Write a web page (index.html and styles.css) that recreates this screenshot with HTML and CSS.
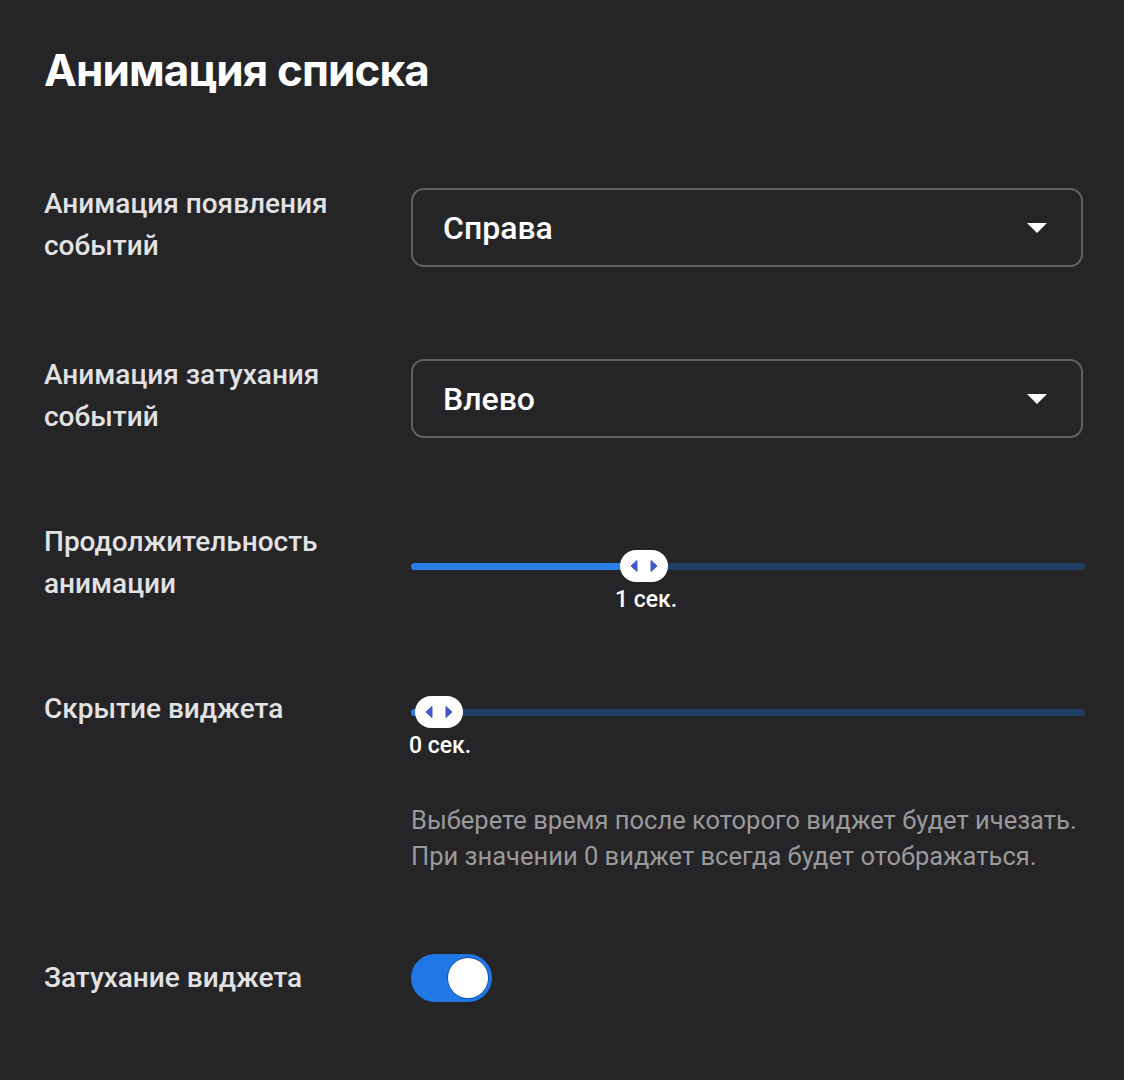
FILE: index.html
```html
<!DOCTYPE html>
<html lang="ru">
<head>
<meta charset="utf-8">
<title>Анимация списка</title>
<link rel="stylesheet" href="styles.css">
</head>
<body>
<main class="page">
  <h1 class="title">Анимация списка</h1>

  <section class="row row-1">
    <div class="label">Анимация появления<br>событий</div>
    <div class="control">
      <div class="select">
        <span class="select-value">Справа</span>
        <span class="select-arrow"></span>
      </div>
    </div>
  </section>

  <section class="row row-2">
    <div class="label">Анимация затухания<br>событий</div>
    <div class="control">
      <div class="select">
        <span class="select-value">Влево</span>
        <span class="select-arrow"></span>
      </div>
    </div>
  </section>

  <section class="row row-3">
    <div class="label">Продолжительность<br>анимации</div>
    <div class="control slider-control slider-control-3">
      <div class="slider" style="--pos:233px">
        <div class="track"><div class="fill"></div></div>
        <div class="thumb">
          <svg width="48" height="32" viewBox="0 0 48 32"><polygon points="11,16 17,10.5 17,21.5"/><polygon points="37,16 31,10.5 31,21.5"/></svg>
        </div>
      </div>
      <div class="value" style="--pos:235px"><span>1 сек.</span></div>
    </div>
  </section>

  <section class="row row-4">
    <div class="label">Скрытие виджета</div>
    <div class="control slider-control slider-control-4">
      <div class="slider" style="--pos:28px">
        <div class="track"><div class="fill"></div></div>
        <div class="thumb">
          <svg width="48" height="32" viewBox="0 0 48 32"><polygon points="11,16 17,10.5 17,21.5"/><polygon points="37,16 31,10.5 31,21.5"/></svg>
        </div>
      </div>
      <div class="value" style="--pos:29px"><span>0 сек.</span></div>
      <p class="help">Выберете время после которого виджет будет ичезать.<br>При значении 0 виджет всегда будет отображаться.</p>
    </div>
  </section>

  <section class="row row-5">
    <div class="label">Затухание виджета</div>
    <div class="control">
      <div class="toggle"><div class="knob"></div></div>
    </div>
  </section>
</main>
</body>
</html>
```

FILE: styles.css
```css
html, body {
  margin: 0;
  padding: 0;
  background: #252527;
}

.page {
  padding: 44px 0 0 44px;
  font-family: Roboto, "Liberation Sans", Arial, sans-serif;
  color: #e4e4e6;
}

.title {
  margin: 0;
  font-family: Inter, "Noto Sans", sans-serif;
  font-weight: 700;
  font-size: 44px;
  line-height: 52px;
  color: #ffffff;
  letter-spacing: -0.9px;
}

.row {
  display: grid;
  grid-template-columns: 367px 674px;
  align-items: start;
}

.row-1 { margin-top: 87px; }
.row-2 { margin-top: 87px; }
.row-3 { margin-top: 83px; }
.row-4 { margin-top: 75px; }
.row-5 { margin-top: 80px; align-items: center; }

.label {
  font-size: 28px;
  font-weight: 500;
  line-height: 42px;
  color: #e2e2e4;
}

.select {
  box-sizing: border-box;
  width: 672px;
  height: 79px;
  margin-top: 5px;
  border: 2px solid #626264;
  border-radius: 13px;
  display: flex;
  align-items: center;
  justify-content: space-between;
  padding: 0 34px 0 30px;
}

.select-value {
  font-size: 32px;
  font-weight: 500;
  color: #ffffff;
}

.select-arrow {
  width: 0;
  height: 0;
  border-left: 10px solid transparent;
  border-right: 10px solid transparent;
  border-top: 10px solid #ffffff;
}

.slider-control-3 { margin-top: 29px; }
.slider-control-4 { margin-top: 8px; }

.slider {
  position: relative;
  height: 32px;
  display: flex;
  align-items: center;
}

.track {
  width: 100%;
  height: 7px;
  border-radius: 4px;
  background: #213f66;
  overflow: hidden;
}

.fill {
  width: var(--pos);
  height: 100%;
  background: #2a7fe6;
}

.thumb {
  position: absolute;
  top: 0;
  left: calc(var(--pos) - 24px);
  width: 48px;
  height: 32px;
  border-radius: 16px;
  background: #ffffff;
}

.thumb svg {
  display: block;
}

.thumb polygon {
  fill: #4456c9;
  stroke: #4456c9;
  stroke-width: 1;
  stroke-linejoin: round;
}

.value {
  margin-top: 5px;
  padding-left: var(--pos);
  font-size: 23px;
  font-weight: 500;
  line-height: 26px;
  color: #ffffff;
}

.value span {
  display: inline-block;
  transform: translateX(-50%);
}

.help {
  margin: 43px 0 0;
  font-size: 25.5px;
  line-height: 36px;
  color: #9a9a9c;
}

.toggle {
  box-sizing: border-box;
  width: 81px;
  height: 48px;
  border-radius: 24px;
  background: #1f78e6;
  padding: 4px;
  display: flex;
  justify-content: flex-end;
}

.knob {
  width: 40px;
  height: 40px;
  border-radius: 50%;
  background: #ffffff;
  box-shadow: 0 0 0 1px #1456a8;
}
```
